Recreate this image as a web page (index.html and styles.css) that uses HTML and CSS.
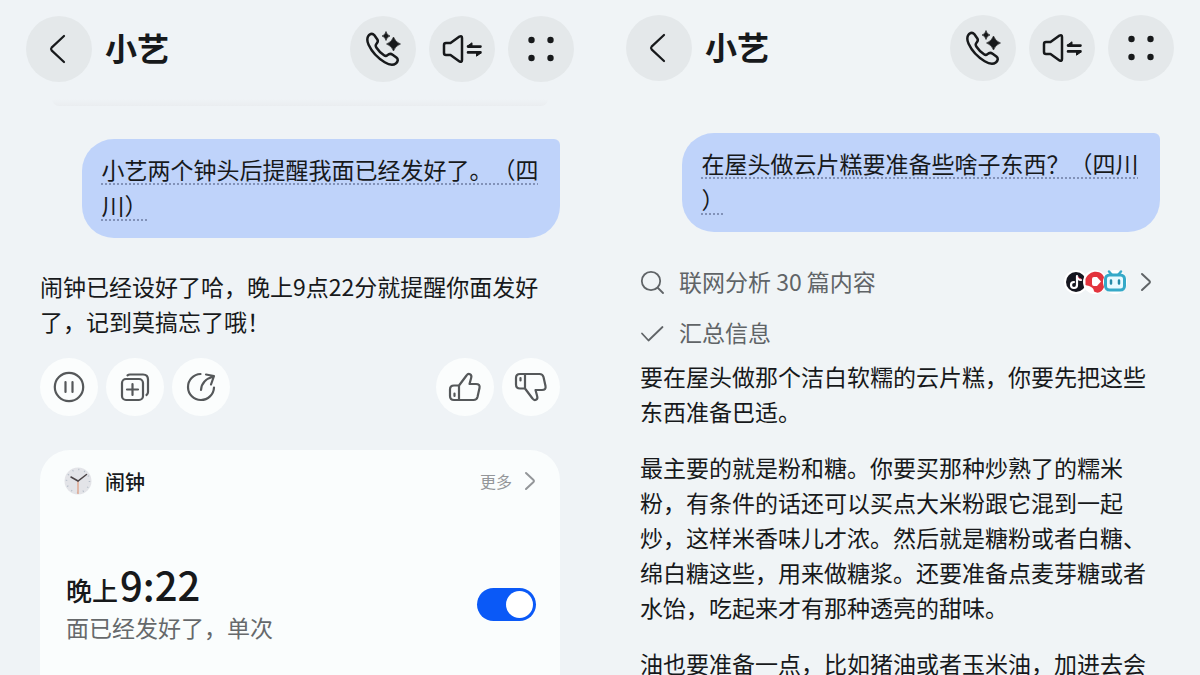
FILE: index.html
```html
<!DOCTYPE html>
<html lang="zh-CN">
    <head>
        <meta charset="utf-8">
        <title>小艺</title>
        <link rel="stylesheet" href="styles.css">
    </head>
    <body>
        <svg class="sprite" aria-hidden="true">
            <symbol id="back" viewBox="0 0 32 32">
                <path d="M21 3 8.600 14.600Q7.400 16 8.600 17.400L21 29" fill="none" stroke="currentColor" stroke-width="2.200" stroke-linecap="round"/>
            </symbol>
            <symbol id="call" viewBox="0 0 36 36">
                <path d="M3 5.500C4 3.200 7.200 1.800 9.200 4L12.200 8.200C13.400 10 13 11.200 11.600 12.600C10.300 14 10.300 15 11.500 16.700C13.300 19.400 16.100 22.300 19 24.300C20.300 25.200 21.300 25.200 22.500 24.100C24.200 22.500 25.800 22.400 27.600 23.700L31.400 26.500C33.500 28.200 33 30.800 30.800 32.400C27.800 34.600 23.700 33.600 19.700 31.200C12.800 27.100 6.600 20.300 3.600 13.800C2.200 10.700 1.900 7.900 3 5.500Z" fill="none" stroke="currentColor" stroke-width="2.500" stroke-linejoin="round"/>
                <path d="M21 .5Q21.900 4.100 25 5Q21.900 5.900 21 9.500Q20.100 5.900 17 5Q20.100 4.100 21 .5ZM28.500 6Q30.300 11.200 35.500 13Q30.300 14.800 28.500 20Q26.700 14.800 21.500 13Q26.700 11.200 28.500 6Z" fill="currentColor" stroke="currentColor" stroke-width=".6" stroke-linejoin="round"/>
            </symbol>
            <symbol id="speaker" viewBox="0 0 40 32">
                <path d="M4 10H8.500L17.500 3.600Q20 2.200 20 5V27Q20 29.800 17.500 28.400L8.500 22H4Q2 22 2 20V12Q2 10 4 10Z" fill="none" stroke="currentColor" stroke-width="2.500" stroke-linejoin="round"/>
                <path d="M26 13.600H38.500M26 19.400H38.500" fill="none" stroke="currentColor" stroke-width="2.600" stroke-linecap="round"/>
                <path d="M25.500 13 30 9.800V13ZM39 20 34.500 23.200V20Z" fill="currentColor" stroke="currentColor" stroke-linejoin="round"/>
            </symbol>
            <symbol id="dots" viewBox="0 0 32 32">
                <g fill="currentColor"><circle cx="6.500" cy="7" r="3.200"/><circle cx="25.500" cy="7" r="3.200"/><circle cx="6.500" cy="25" r="3.200"/><circle cx="25.500" cy="25" r="3.200"/></g>
            </symbol>
            <symbol id="next" viewBox="0 0 12 20">
                <path d="M2 2 9.500 9Q10.500 10 9.500 11L2 18" fill="none" stroke="currentColor" stroke-width="2" stroke-linecap="round"/>
            </symbol>
        </svg>

        <main class="screens">
            <section class="screen">
                <header class="topbar">
                    <button class="round" aria-label="返回"><svg width="32" height="32"><use href="#back"/></svg></button>
                    <h1>小艺</h1>
                    <button class="round" aria-label="通话"><svg width="36" height="36"><use href="#call"/></svg></button>
                    <button class="round" aria-label="朗读"><svg width="40" height="32"><use href="#speaker"/></svg></button>
                    <button class="round" aria-label="菜单"><svg width="32" height="32"><use href="#dots"/></svg></button>
                </header>
                <div class="edge"></div>

                <div class="chat">
                    <p class="bubble"><span>小艺两个钟头后提醒我面已经发好了。（四<br>川）</span></p>
                    <p class="reply">闹钟已经设好了哈，晚上9点22分就提醒你面发好<br>了，记到莫搞忘了哦！</p>

                    <div class="actions">
                        <button class="action" aria-label="暂停">
                            <svg width="32" height="32" viewBox="0 0 32 32"><circle cx="16" cy="16" r="14.200"/><path d="M12.500 11V21M19.500 11V21"/></svg>
                        </button>
                        <button class="action" aria-label="复制">
                            <svg width="32" height="32" viewBox="0 0 32 32"><rect x="3" y="8" width="21" height="21" rx="4"/><path d="M13.500 13V24M8 18.500H19M8.500 4.300Q9.500 3.500 11 3.500H24Q29 3.500 29 8.500V21Q29 23 27.500 24"/></svg>
                        </button>
                        <button class="action" aria-label="分享">
                            <svg width="32" height="32" viewBox="0 0 32 32"><path d="M15.500 3A13 13 0 1 0 29 16.500M16 19Q16.500 9 28.500 5.500M21 3.500 29 5 26 13.500"/></svg>
                        </button>
                        <button class="action like" aria-label="赞">
                            <svg width="34" height="32" viewBox="0 0 34 32"><path d="M11 14.500 18.500 4.500C20.500 1.500 24.200 3.200 23.200 6.800L21.500 13H28Q32.300 13 31.500 17L29.500 26Q28.700 29 25.500 29H6Q2 29 2 25V18.500Q2 14.500 6 14.500H11V29M6.500 22.500V25"/></svg>
                        </button>
                        <button class="action" aria-label="踩">
                            <svg width="34" height="32" viewBox="0 0 34 32"><path d="M11 17.500 18.500 27.500C20.500 30.500 24.200 28.800 23.200 25.200L21.500 19H28Q32.300 19 31.500 15L29.500 6Q28.700 3 25.500 3H6Q2 3 2 7V13.500Q2 17.500 6 17.500H11V3M6.500 7V9.500"/></svg>
                        </button>
                    </div>

                    <article class="card">
                        <div class="card-head">
                            <svg width="28" height="28" viewBox="0 0 28 28">
                                <circle cx="14" cy="14" r="13.500" fill="#e3e4e8"/>
                                <circle cx="14" cy="14" r="11.500" fill="none" stroke="#b4bdc8" stroke-width="1.500" stroke-dasharray="1 5.020"/>
                                <path d="M14 14V27" stroke="#e0a890" stroke-width="1.500"/>
                                <path d="M7 10 14 14 22.500 7.500" fill="none" stroke="#4b4446" stroke-width="1.500" stroke-linecap="round"/>
                            </svg>
                            <h2>闹钟</h2>
                            <a href="#" class="more">更多 <svg width="12" height="20"><use href="#next"/></svg></a>
                        </div>
                        <div class="alarm">
                            <label for="alarm">
                                <span class="time">晚上<b>9:22</b></span>
                                <span class="note">面已经发好了，单次</span>
                            </label>
                            <input type="checkbox" id="alarm" class="switch" checked>
                        </div>
                    </article>
                </div>
            </section>

            <section class="screen second">
                <header class="topbar">
                    <button class="round" aria-label="返回"><svg width="32" height="32"><use href="#back"/></svg></button>
                    <h1>小艺</h1>
                    <button class="round" aria-label="通话"><svg width="36" height="36"><use href="#call"/></svg></button>
                    <button class="round" aria-label="朗读"><svg width="40" height="32"><use href="#speaker"/></svg></button>
                    <button class="round" aria-label="菜单"><svg width="32" height="32"><use href="#dots"/></svg></button>
                </header>

                <div class="chat">
                    <p class="bubble"><span>在屋头做云片糕要准备些啥子东西？（四川<br>）</span></p>

                    <a href="#" class="step">
                        <svg width="24" height="24" viewBox="0 0 24 24"><circle cx="11" cy="11" r="9.200"/><path d="M18 18 23 23"/></svg>
                        联网分析 30 篇内容
                        <svg class="sources" width="66" height="28" viewBox="0 0 66 28">
                            <circle cx="13" cy="14" r="12" fill="#fff"/>
                            <circle cx="13" cy="14" r="10" fill="#15161f"/>
                            <path d="M14 8V17A3 3 0 1 1 11 14M14 8.500Q15 12 18 12" fill="none" stroke="#fff" stroke-width="2.200"/>
                            <path d="M15.200 9Q16 11 18 11" fill="none" stroke="#f04a68" stroke-width="1"/>
                            <circle cx="32" cy="14" r="12" fill="#fff"/>
                            <path d="M22.500 11C25 4 34 1.500 39 6C43 10 43 19 38.500 23Q35 26 31 23.500C31 19 26 18 22.500 17Z" fill="#e3343d"/>
                            <path d="M29 11Q29 9 31 9H34L38 13.500 34 18H31Q29 18 29 16Z" fill="#fff"/>
                            <circle cx="52" cy="14" r="12" fill="#fff"/>
                            <path d="M46 3.500 49 7M58 3.500 55 7" stroke="#35a9c8" stroke-width="2.500" stroke-linecap="round"/>
                            <rect x="42.500" y="7" width="19" height="15" rx="4" fill="#e9faff" stroke="#35a9c8" stroke-width="3"/>
                            <path d="M48 12.500V15.500M56 12.500V15.500" stroke="#258aa8" stroke-width="2.500" stroke-linecap="round"/>
                        </svg>
                        <svg class="arrow" width="12" height="20"><use href="#next"/></svg>
                    </a>
                    <div class="step">
                        <svg width="24" height="24" viewBox="0 0 24 24"><path d="M2 12.500 8.500 19.500 22.500 6"/></svg>
                        汇总信息
                    </div>

                    <div class="answer">
                        <p>要在屋头做那个洁白软糯的云片糕，你要先把这些<br>东西准备巴适。</p>
                        <p>最主要的就是粉和糖。你要买那种炒熟了的糯米<br>粉，有条件的话还可以买点大米粉跟它混到一起<br>炒，这样米香味儿才浓。然后就是糖粉或者白糖、<br>绵白糖这些，用来做糖浆。还要准备点麦芽糖或者<br>水饴，吃起来才有那种透亮的甜味。</p>
                        <p>油也要准备一点，比如猪油或者玉米油，加进去会</p>
                    </div>
                </div>
            </section>
        </main>
    </body>
</html>
```

FILE: styles.css
```css
* {
    box-sizing: border-box;
}
body {
    margin: 0;
    font-family: "Noto Sans CJK SC", sans-serif;
    font-size: 23px;
    line-height: 35px;
    color: #17191b;
    background-color: #eff3f6;
    text-spacing-trim: space-all;
}
h1, h2, p {
    margin: 0;
}
button {
    padding: 0;
    border: none;
    color: inherit;
    cursor: pointer;
}
a {
    color: inherit;
    text-decoration: none;
}
svg {
    display: block;
    flex: none;
}
.sprite {
    position: absolute;
    width: 0;
    height: 0;
}
.screens {
    display: grid;
    grid-template-columns: 1fr 1fr;
    height: 100vh;
    overflow: hidden;
}
.screen {
    padding-top: 16px;
}
.second {
    padding-top: 15px;
    background-color: #f0f4f6;
}

/* top bar */
.topbar {
    display: flex;
    align-items: center;
    gap: 13px;
    padding: 0 26px;
}
.topbar h1 {
    flex: 1;
    padding-bottom: 4px;
    font-size: 32px;
    line-height: 40px;
    font-weight: 700;
}
.round {
    display: grid;
    place-items: center;
    width: 66px;
    height: 66px;
    border-radius: 50%;
    background-color: #e4e8ea;
}
.edge {
    height: 7px;
    margin: 17px 52px 0;
    border-radius: 0 0 16px 16px;
    background: linear-gradient(#eff3f6, #eaedf0);
}

/* messages */
.chat {
    display: flex;
    flex-direction: column;
    padding: 33px 40px 0;
}
.second .chat {
    padding-top: 52px;
}
.bubble {
    align-self: flex-end;
    width: 92%;
    padding: 12px 20px 15px;
    border-radius: 32px 6px 32px 32px;
    line-height: 36px;
    white-space: nowrap;
    background-color: #bfd3fa;
}
.bubble span {
    text-decoration: underline dotted #8292b8 2px;
    text-underline-offset: 4px;
}
.reply {
    margin-top: 31px;
    white-space: nowrap;
}
.actions {
    display: flex;
    gap: 8px;
    margin-top: 19px;
}
.action {
    display: grid;
    place-items: center;
    width: 58px;
    height: 58px;
    border-radius: 50%;
    background-color: #fbfdfd;
}
.action svg {
    fill: none;
    stroke: #55585a;
    stroke-width: 2.2;
    stroke-linecap: round;
    stroke-linejoin: round;
}
.like {
    margin-left: auto;
}

/* alarm card */
.card {
    height: 260px;
    margin-top: 34px;
    padding: 15px 24px;
    border-radius: 30px;
    background-color: #fafdfd;
}
.card-head {
    display: flex;
    align-items: center;
    gap: 13px;
    height: 32px;
}
.card-head h2 {
    flex: 1;
    font-size: 20px;
    font-weight: 500;
}
.more {
    display: flex;
    align-items: center;
    gap: 12px;
    font-size: 16px;
    color: #939699;
}
.alarm {
    display: flex;
    align-items: center;
    justify-content: space-between;
    margin-top: 67px;
    padding-left: 2px;
}
.time, .note {
    display: block;
}
.time {
    font-size: 26px;
    line-height: 41px;
    font-weight: 500;
}
.time b {
    margin-left: 2px;
    font-size: 40px;
    font-weight: 500;
}
.note {
    color: #66696b;
}
.switch {
    appearance: none;
    display: flex;
    width: 59px;
    height: 33px;
    margin: 0;
    padding: 3px;
    border-radius: 17px;
    background-color: #0a59f7;
    cursor: pointer;
}
.switch::before {
    content: "";
    width: 27px;
    height: 27px;
    border-radius: 50%;
    background-color: #fff;
}
.switch:checked {
    justify-content: flex-end;
}

/* search steps and answer */
.step {
    display: flex;
    align-items: center;
    gap: 15px;
    margin-top: 16px;
    color: #606467;
}
.bubble + .step {
    margin-top: 32px;
}
.step svg {
    fill: none;
    stroke: #606467;
    stroke-width: 1.8;
    stroke-linecap: round;
    stroke-linejoin: round;
}
.step .sources {
    margin-left: auto;
    stroke: none;
}
.step .arrow {
    margin: 0 8px 0 -4px;
}
.answer {
    display: flex;
    flex-direction: column;
    gap: 21px;
    margin-top: 9px;
    white-space: nowrap;
}
```
